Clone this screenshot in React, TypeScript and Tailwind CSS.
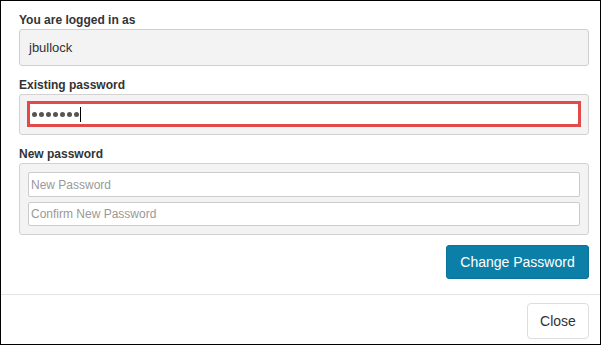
import React from "react";

const font = { fontFamily: '"Liberation Sans", Arial, sans-serif' };

export default function App() {
  return (
    <div
      className="w-[601px] h-[345px] border border-black bg-white flex flex-col overflow-hidden text-[#333]"
      style={font}
    >
      {/* Body */}
      <div className="pl-[18px] pr-[11px] pt-[11px] flex flex-col">
        <label className="text-[12px] font-bold leading-[17px]">You are logged in as</label>
        <div className="h-[37px] border border-[#cfcfcf] bg-[#f3f3f3] rounded-[3px] flex items-center pl-[9px] text-[13px]">
          jbullock
        </div>

        <label className="mt-[11px] text-[12px] font-bold leading-[17px]">Existing password</label>
        <div className="border border-[#d2d2d2] bg-[#f3f3f3] rounded-[3px] px-[7px] pt-[6px] pb-[7px]">
          <div className="h-[26px] border-[3px] border-[#e24a4a] bg-white flex items-center pl-[2px]">
            <div className="flex gap-[2px]">
              {[0, 1, 2, 3, 4, 5, 6].map((i) => (
                <span key={i} className="w-[5px] h-[5px] rounded-full bg-[#555]" />
              ))}
            </div>
            <span className="ml-[1px] w-px h-[15px] bg-black" />
          </div>
        </div>

        <label className="mt-[11px] text-[12px] font-bold leading-[17px]">New password</label>
        <div className="border border-[#d2d2d2] bg-[#f3f3f3] rounded-[3px] p-[8px] flex flex-col gap-[5px]">
          <input
            type="password"
            placeholder="New Password"
            className="h-[25px] border border-[#cccccc] bg-white rounded-[2px] pl-[2px] text-[12px] placeholder:text-[#999] outline-none"
            style={font}
          />
          <input
            type="password"
            placeholder="Confirm New Password"
            className="h-[24px] border border-[#cccccc] bg-white rounded-[2px] pl-[2px] text-[12px] placeholder:text-[#999] outline-none"
            style={font}
          />
        </div>

        <div className="flex justify-end mt-[10px]">
          <button className="w-[143px] h-[34px] rounded-[3px] bg-[#0b7fa7] border border-[#0a7399] text-white text-[14px]">
            Change Password
          </button>
        </div>
      </div>

      {/* Footer */}
      <div className="mt-[15px] border-t border-[#e5e5e5] flex justify-end pr-[11px] pt-[8px]">
        <button className="w-[62px] h-[36px] rounded-[4px] border border-[#dddddd] bg-white text-[14px] text-[#333]">
          Close
        </button>
      </div>
    </div>
  );
}
